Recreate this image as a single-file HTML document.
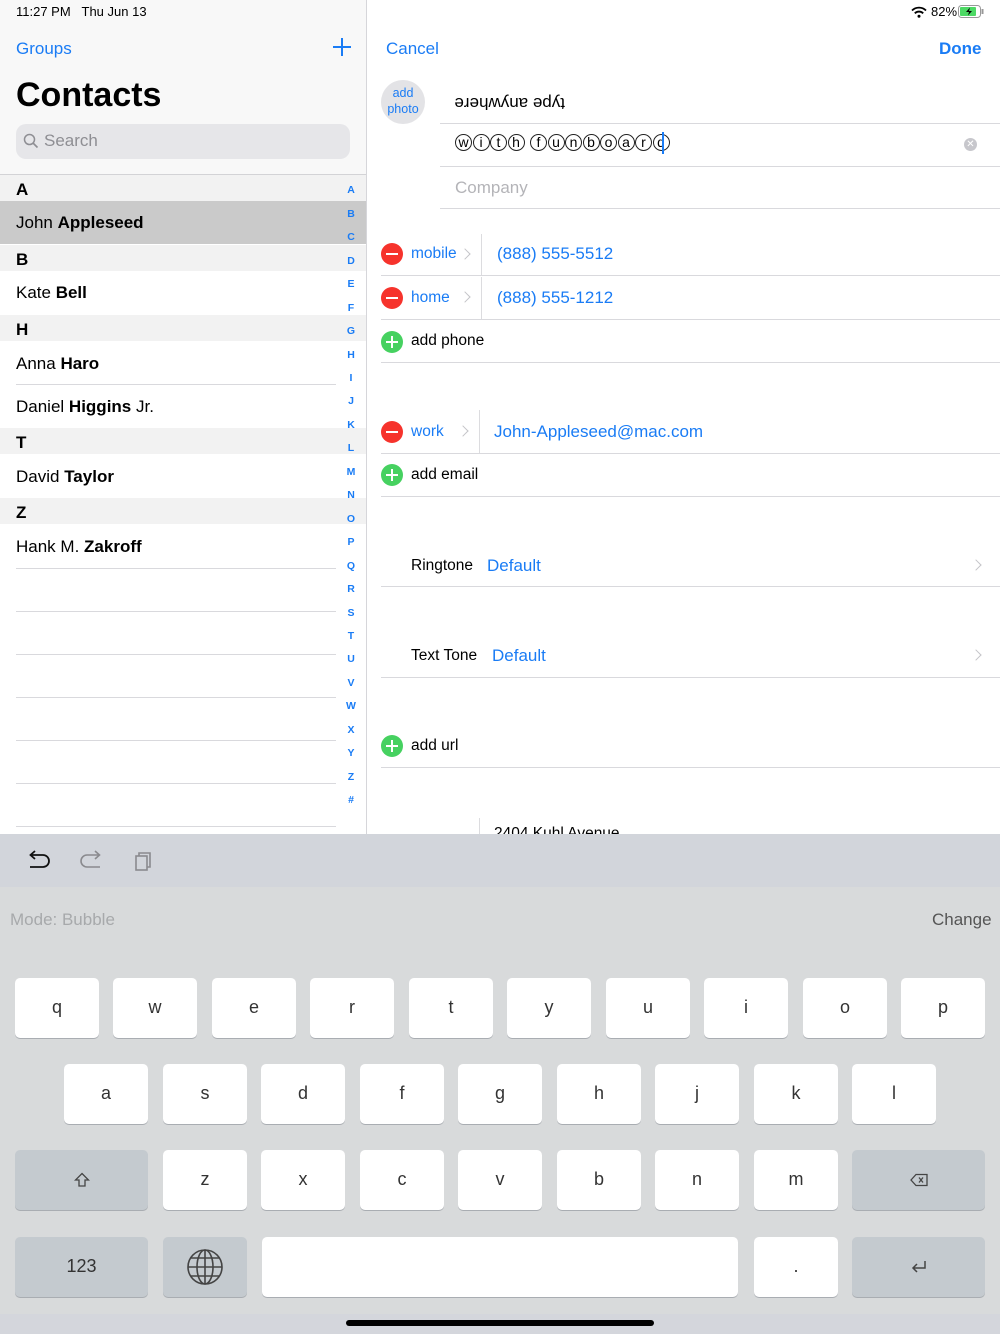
<!DOCTYPE html>
<html><head><meta charset="utf-8"><style>
*{margin:0;padding:0;box-sizing:border-box}
body{width:1000px;height:1334px;position:relative;overflow:hidden;font-family:"Liberation Sans",sans-serif;background:#fff;color:#000}
.a{position:absolute;white-space:nowrap}
.blue{color:#1a7cf5}
.ln{position:absolute;height:1px;background:#d9d9dd}
.vl{position:absolute;width:1px;background:#dcdcdf}
.sec{position:absolute;left:0;width:366px;height:26px;background:#f2f2f2;font-weight:bold;font-size:17px;padding:5px 0 0 16px}
.row{position:absolute;left:0;width:340px;font-size:17px;padding-left:16px}
.idx{position:absolute;left:344px;width:14px;text-align:center;font-size:10.5px;font-weight:bold;color:#1a7cf5}
.key{position:absolute;width:84px;height:60px;background:#fff;border-radius:5px;box-shadow:0 1px 0 #a9adb2;text-align:center;font-size:18px;line-height:58px;color:#333}
.g{background:#c4cacf}
.minus,.plus{position:absolute;left:381px;width:22px;height:22px;border-radius:11px}
.minus{background:#f6332c}.minus:after{content:"";position:absolute;left:5px;top:10px;width:12px;height:2px;background:#fff}
.plus{background:#46d160}.plus:after{content:"";position:absolute;left:5px;top:10px;width:12px;height:1.5px;background:#fff}
.plus:before{content:"";position:absolute;left:10.3px;top:5px;width:1.5px;height:12px;background:#fff}
.chev{position:absolute;width:8px;height:8px;border-right:1.6px solid #c4c4c8;border-top:1.6px solid #c4c4c8;transform:rotate(45deg)}
.circ{display:inline-block;width:17px;height:17px;border:1px solid #222;border-radius:50%;text-align:center;font-size:14px;line-height:15px;margin-right:0.5px}
</style></head><body>
<div class="a" style="left:0;top:0;width:366px;height:175px;background:#f8f8f8"></div>
<div class="vl" style="left:366px;top:0;height:834px;background:#d6d6da"></div>
<div class="a" style="left:16px;top:4px;font-size:13px">11:27 PM&nbsp;&nbsp;&nbsp;Thu Jun 13</div>
<div class="a blue" style="left:16px;top:39px;font-size:17px">Groups</div>
<div class="a" style="left:333px;top:46px;width:18px;height:2px;background:#1a7cf5"></div>
<div class="a" style="left:341px;top:38px;width:2px;height:18px;background:#1a7cf5"></div>
<div class="a" style="left:16px;top:76px;font-size:34px;font-weight:bold">Contacts</div>
<div class="a" style="left:16px;top:124px;width:334px;height:35px;background:#e6e6e9;border-radius:10px"></div>
<svg class="a" style="left:23px;top:133px" width="16" height="16"><circle cx="6.5" cy="6.5" r="5" fill="none" stroke="#8e8e93" stroke-width="1.5"/><line x1="10" y1="10" x2="14.5" y2="14.5" stroke="#8e8e93" stroke-width="1.6"/></svg>
<div class="a" style="left:44px;top:131px;font-size:17px;color:#8e8e93">Search</div>
<div class="ln" style="left:0;top:174px;width:366px;background:#d3d3d6"></div>
<div class="sec" style="top:175px">A</div>
<div class="row" style="top:201px;width:366px;height:43px;background:#cacaca;padding-top:12px">John <b>Appleseed</b></div>
<div class="sec" style="top:245px">B</div>
<div class="row" style="top:283px">Kate <b>Bell</b></div>
<div class="sec" style="top:315px">H</div>
<div class="row" style="top:354px">Anna <b>Haro</b></div>
<div class="ln" style="left:16px;top:384px;width:320px"></div>
<div class="row" style="top:397px">Daniel <b>Higgins</b> Jr.</div>
<div class="sec" style="top:428px">T</div>
<div class="row" style="top:467px">David <b>Taylor</b></div>
<div class="sec" style="top:498px">Z</div>
<div class="row" style="top:537px">Hank M. <b>Zakroff</b></div>
<div class="ln" style="left:16px;top:568px;width:320px"></div>
<div class="ln" style="left:16px;top:611px;width:320px"></div>
<div class="ln" style="left:16px;top:654px;width:320px"></div>
<div class="ln" style="left:16px;top:697px;width:320px"></div>
<div class="ln" style="left:16px;top:740px;width:320px"></div>
<div class="ln" style="left:16px;top:783px;width:320px"></div>
<div class="ln" style="left:16px;top:826px;width:320px"></div>
<div class="idx" style="top:184px">A</div><div class="idx" style="top:208px">B</div><div class="idx" style="top:231px">C</div><div class="idx" style="top:255px">D</div><div class="idx" style="top:278px">E</div><div class="idx" style="top:302px">F</div><div class="idx" style="top:325px">G</div><div class="idx" style="top:349px">H</div><div class="idx" style="top:372px">I</div><div class="idx" style="top:395px">J</div><div class="idx" style="top:419px">K</div><div class="idx" style="top:442px">L</div><div class="idx" style="top:466px">M</div><div class="idx" style="top:489px">N</div><div class="idx" style="top:513px">O</div><div class="idx" style="top:536px">P</div><div class="idx" style="top:560px">Q</div><div class="idx" style="top:583px">R</div><div class="idx" style="top:607px">S</div><div class="idx" style="top:630px">T</div><div class="idx" style="top:653px">U</div><div class="idx" style="top:677px">V</div><div class="idx" style="top:700px">W</div><div class="idx" style="top:724px">X</div><div class="idx" style="top:747px">Y</div><div class="idx" style="top:771px">Z</div><div class="idx" style="top:794px">#</div>

<svg class="a" style="left:911px;top:6px" width="16" height="12"><path d="M1 4.5 A10 10 0 0 1 15 4.5" fill="none" stroke="#000" stroke-width="1.8"/><path d="M3.8 7.3 A6 6 0 0 1 12.2 7.3" fill="none" stroke="#000" stroke-width="1.8"/><circle cx="8" cy="10.3" r="1.5"/></svg>
<div class="a" style="left:931px;top:4px;font-size:13px">82%</div>
<svg class="a" style="left:958px;top:5px" width="28" height="13"><rect x="0.5" y="0.5" width="22" height="12" rx="3" fill="none" stroke="#999"/><rect x="2" y="2" width="16" height="9" rx="1" fill="#4cd964"/><rect x="23.5" y="4" width="2" height="5" fill="#999"/><path d="M12 2.5 L8 7 H11 L10 10.5 L14 6 H11 Z" fill="#000"/></svg>
<div class="a blue" style="left:386px;top:39px;font-size:17px">Cancel</div>
<div class="a blue" style="left:939px;top:39px;font-size:17px;font-weight:bold">Done</div>
<div class="a" style="left:381px;top:80px;width:44px;height:44px;border-radius:22px;background:#e3e3e6;text-align:center;font-size:12.5px;line-height:16px;padding-top:5px;color:#1a7cf5">add<br>photo</div>
<div class="a" style="left:455px;top:91px;font-size:17px;transform:rotate(180deg);transform-origin:55px 11px">type anywhere</div>
<div class="ln" style="left:440px;top:123px;width:560px"></div>
<div class="a" style="left:455px;top:134px;font-size:0"><span class="circ">w</span><span class="circ">i</span><span class="circ">t</span><span class="circ">h</span><span style="display:inline-block;width:5px"></span><span class="circ">f</span><span class="circ">u</span><span class="circ">n</span><span class="circ">b</span><span class="circ">o</span><span class="circ">a</span><span class="circ">r</span><span class="circ">d</span></div>
<div class="a" style="left:662px;top:132px;width:2px;height:22px;background:#1a7cf5"></div>
<div class="a" style="left:964px;top:138px;width:13px;height:13px;border-radius:7px;background:#c7c7cc;color:#fff;font-size:10px;text-align:center;line-height:13px">✕</div>
<div class="ln" style="left:440px;top:166px;width:560px"></div>
<div class="a" style="left:455px;top:178px;font-size:17px;color:#b4b4b8">Company</div>
<div class="ln" style="left:440px;top:208px;width:560px"></div>

<div class="minus" style="top:243px"></div>
<div class="a blue" style="left:411px;top:245px;font-size:15.5px">mobile</div>
<div class="chev" style="left:461px;top:250px"></div>
<div class="vl" style="left:481px;top:234px;height:41px"></div>
<div class="a blue" style="left:497px;top:244px;font-size:17px">(888) 555-5512</div>
<div class="ln" style="left:381px;top:275px;width:619px"></div>
<div class="minus" style="top:287px"></div>
<div class="a blue" style="left:411px;top:289px;font-size:15.5px">home</div>
<div class="chev" style="left:461px;top:293px"></div>
<div class="vl" style="left:481px;top:277px;height:42px"></div>
<div class="a blue" style="left:497px;top:288px;font-size:17px">(888) 555-1212</div>
<div class="ln" style="left:381px;top:319px;width:619px"></div>
<div class="plus" style="top:331px"></div>
<div class="a" style="left:411px;top:332px;font-size:15.5px">add phone</div>
<div class="ln" style="left:381px;top:362px;width:619px"></div>

<div class="minus" style="top:421px"></div>
<div class="a blue" style="left:411px;top:423px;font-size:15.5px">work</div>
<div class="chev" style="left:459px;top:427px"></div>
<div class="vl" style="left:479px;top:410px;height:43px"></div>
<div class="a blue" style="left:494px;top:422px;font-size:17px">John-Appleseed@mac.com</div>
<div class="ln" style="left:381px;top:453px;width:619px"></div>
<div class="plus" style="top:464px"></div>
<div class="a" style="left:411px;top:466px;font-size:15.5px">add email</div>
<div class="ln" style="left:381px;top:496px;width:619px"></div>

<div class="a" style="left:411px;top:557px;font-size:15.5px">Ringtone</div>
<div class="a blue" style="left:487px;top:556px;font-size:17px">Default</div>
<div class="chev" style="left:972px;top:561px"></div>
<div class="ln" style="left:381px;top:586px;width:619px"></div>
<div class="a" style="left:411px;top:647px;font-size:15.5px">Text Tone</div>
<div class="a blue" style="left:492px;top:646px;font-size:17px">Default</div>
<div class="chev" style="left:972px;top:651px"></div>
<div class="ln" style="left:381px;top:677px;width:619px"></div>
<div class="plus" style="top:735px"></div>
<div class="a" style="left:411px;top:737px;font-size:15.5px">add url</div>
<div class="ln" style="left:381px;top:767px;width:619px"></div>
<div class="vl" style="left:479px;top:818px;height:16px"></div>
<div class="a" style="left:494px;top:825px;font-size:15.5px">2404 Kuhl Avenue</div>

<div class="a" style="left:0;top:834px;width:1000px;height:53px;background:#d2d5db"></div>
<svg class="a" style="left:26px;top:850px" width="26" height="24"><path d="M5 5 H17 A6 6 0 0 1 17 17 H4" fill="none" stroke="#111" stroke-width="1.8"/><path d="M9 1 L4.5 5 L9 9" fill="none" stroke="#111" stroke-width="1.8"/></svg>
<svg class="a" style="left:78px;top:850px" width="26" height="24"><path d="M21 5 H9 A6 6 0 0 0 9 17 H22" fill="none" stroke="#8a8a8e" stroke-width="1.6"/><path d="M17 1 L21.5 5 L17 9" fill="none" stroke="#8a8a8e" stroke-width="1.6"/></svg>
<svg class="a" style="left:134px;top:850px" width="20" height="22"><rect x="2" y="6" width="11" height="14" fill="none" stroke="#8a8a8e" stroke-width="1.6"/><path d="M5 6 V3 H16 V17 H13" fill="none" stroke="#8a8a8e" stroke-width="1.6"/></svg>
<div class="a" style="left:0;top:887px;width:1000px;height:427px;background:#d8dadb"></div>
<div class="a" style="left:10px;top:910px;font-size:17px;color:#a7a9ab">Mode: Bubble</div>
<div class="a" style="left:932px;top:910px;font-size:17px;color:#555">Change</div>

<div class="key" style="left:15px;top:978px">q</div><div class="key" style="left:113px;top:978px">w</div><div class="key" style="left:212px;top:978px">e</div><div class="key" style="left:310px;top:978px">r</div><div class="key" style="left:409px;top:978px">t</div><div class="key" style="left:507px;top:978px">y</div><div class="key" style="left:606px;top:978px">u</div><div class="key" style="left:704px;top:978px">i</div><div class="key" style="left:803px;top:978px">o</div><div class="key" style="left:901px;top:978px">p</div>
<div class="key" style="left:64px;top:1064px">a</div><div class="key" style="left:163px;top:1064px">s</div><div class="key" style="left:261px;top:1064px">d</div><div class="key" style="left:360px;top:1064px">f</div><div class="key" style="left:458px;top:1064px">g</div><div class="key" style="left:557px;top:1064px">h</div><div class="key" style="left:655px;top:1064px">j</div><div class="key" style="left:754px;top:1064px">k</div><div class="key" style="left:852px;top:1064px">l</div>
<div class="key g" style="left:15px;top:1150px;width:133px"><svg width="16" height="16" style="margin-top:22px"><path d="M8 1.5 L14.5 8 H11 V14 H5 V8 H1.5 Z" fill="none" stroke="#444" stroke-width="1.3"/></svg></div>
<div class="key" style="left:163px;top:1150px">z</div><div class="key" style="left:261px;top:1150px">x</div><div class="key" style="left:360px;top:1150px">c</div><div class="key" style="left:458px;top:1150px">v</div><div class="key" style="left:557px;top:1150px">b</div><div class="key" style="left:655px;top:1150px">n</div><div class="key" style="left:754px;top:1150px">m</div>
<div class="key g" style="left:852px;top:1150px;width:133px"><svg width="18" height="14" style="margin-top:23px"><path d="M1 7 L6 1.5 H17 V12.5 H6 Z" fill="none" stroke="#444" stroke-width="1.3"/><path d="M9 4.5 L13 9.5 M13 4.5 L9 9.5" stroke="#444" stroke-width="1.3"/></svg></div>
<div class="key g" style="left:15px;top:1237px;width:133px">123</div>
<div class="key g" style="left:163px;top:1237px"><svg width="38" height="38" style="margin-top:11px"><g fill="none" stroke="#444" stroke-width="1.6"><circle cx="19" cy="19" r="17"/><ellipse cx="19" cy="19" rx="8" ry="17"/><line x1="19" y1="2" x2="19" y2="36"/><line x1="2" y1="19" x2="36" y2="19"/><path d="M5 10 H33 M5 28 H33"/></g></svg></div>
<div class="key" style="left:262px;top:1237px;width:476px"></div>
<div class="key" style="left:754px;top:1237px">.</div>
<div class="key g" style="left:852px;top:1237px;width:133px"><svg width="18" height="16" style="margin-top:22px"><path d="M15 2 V9 H3 M7 5 L3 9 L7 13" fill="none" stroke="#444" stroke-width="1.5"/></svg></div>
<div class="a" style="left:0;top:1314px;width:1000px;height:20px;background:#d4d6dc"></div>
<div class="a" style="left:346px;top:1320px;width:308px;height:6px;border-radius:3px;background:#000"></div>
</body></html>
